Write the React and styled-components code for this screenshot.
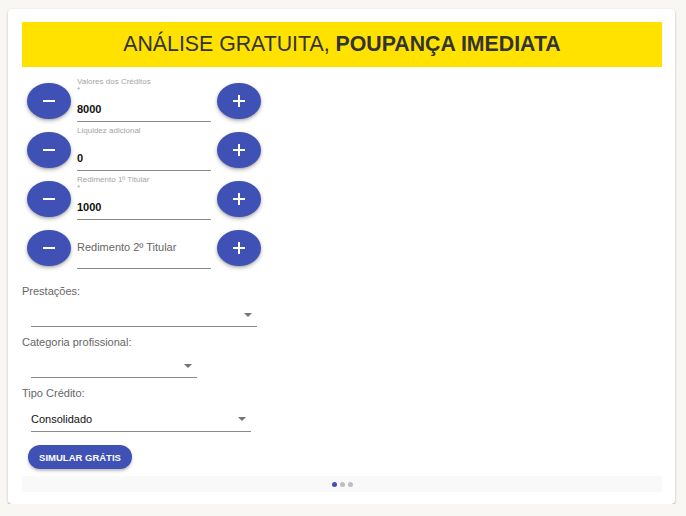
import React from "react";
import styled, { createGlobalStyle } from "styled-components";

const Global = createGlobalStyle`
  html, body { margin: 0; padding: 0; background: #f8f7f3; }
  body { padding: 9px 11px 0 8px; font-family: "Liberation Sans", Arial, sans-serif; }
  * { box-sizing: border-box; }
`;

const Card = styled.div`
  width: 667px;
  background: #fff;
  border-radius: 4px;
  box-shadow: 0 1px 3px rgba(0,0,0,0.2), 0 1px 1px rgba(0,0,0,0.14), 0 2px 1px -1px rgba(0,0,0,0.12);
  padding: 13px 13px 12px 14px;
`;

const Banner = styled.h1`
  margin: 0;
  height: 45px;
  background: #ffe200;
  display: flex;
  align-items: center;
  justify-content: center;
  font-size: 21.3px;
  font-weight: 400;
  color: #333;
  b { font-weight: 700; }
`;

const Steppers = styled.div`
  margin-top: 10px;
  padding-left: 5px;
  display: flex;
  flex-direction: column;
`;

const Row = styled.div`
  height: 49px;
  display: flex;
  align-items: flex-start;
`;

const Fab = styled.button`
  width: 44px;
  height: 36px;
  margin-top: 6px;
  border: none;
  border-radius: 50%;
  background: #3f51b5;
  box-shadow: 0 2px 4px rgba(0,0,0,0.25), 0 1px 2px rgba(0,0,0,0.15);
  display: flex;
  align-items: center;
  justify-content: center;
  padding: 0;
  svg { display: block; }
`;

const Field = styled.div`
  width: 134px;
  height: 45px;
  margin: 0 6px;
  border-bottom: 1px solid #8a8a8a;
  display: flex;
  flex-direction: column;
`;

const SmallLabel = styled.div`
  font-size: 8px;
  line-height: 10px;
  color: #a5a5a5;
  white-space: nowrap;
`;

const Star = styled.div`
  font-size: 8px;
  line-height: 6px;
  color: #a5a5a5;
`;

const Value = styled.div`
  margin-top: auto;
  padding-bottom: ${(p) => (p.$placeholder ? "13px" : "4px")};
  font-size: 11px;
  line-height: 16px;
  font-weight: ${(p) => (p.$placeholder ? 400 : 700)};
  color: ${(p) => (p.$placeholder ? "#666" : "#111")};
`;

const Group = styled.div`
  display: flex;
  flex-direction: column;
  align-items: flex-start;
  margin-top: ${(p) => p.$mt || 0}px;
`;

const GroupLabel = styled.div`
  font-size: 11px;
  line-height: 16px;
  color: #666;
`;

const Select = styled.div`
  position: relative;
  margin-left: 9px;
  width: ${(p) => p.$w}px;
  height: ${(p) => p.$h}px;
  border-bottom: 1px solid #8a8a8a;
  display: flex;
  align-items: flex-end;
  padding-bottom: 4px;
  font-size: 11px;
  line-height: 16px;
  color: #111;
`;

const Arrow = styled.span`
  position: absolute;
  right: 5px;
  bottom: ${(p) => p.$b}px;
  width: 0;
  height: 0;
  border-left: 4px solid transparent;
  border-right: 4px solid transparent;
  border-top: 4px solid #757575;
`;

const Submit = styled.button`
  margin: 13px 0 0 6px;
  height: 24px;
  width: 104px;
  border: none;
  border-radius: 12px;
  background: #3f51b5;
  color: #fff;
  font-family: "Liberation Sans", Arial, sans-serif;
  font-size: 9.5px;
  font-weight: 700;
  text-transform: uppercase;
  box-shadow: 0 2px 3px rgba(0,0,0,0.25);
  padding: 0;
`;

const Footer = styled.div`
  margin-top: 7px;
  height: 16px;
  background: #f9f9f9;
  display: flex;
  align-items: center;
  justify-content: center;
  gap: 3px;
`;

const Dot = styled.span`
  width: 5px;
  height: 5px;
  border-radius: 50%;
  background: ${(p) => (p.$active ? "#3f51b5" : "#bdbdbd")};
`;

const Minus = () => (
  <svg width="14" height="14" viewBox="0 0 14 14"><path d="M1 7h12" stroke="#fff" strokeWidth="2" /></svg>
);
const Plus = () => (
  <svg width="14" height="14" viewBox="0 0 14 14"><path d="M1 7h12M7 1v12" stroke="#fff" strokeWidth="2" /></svg>
);

const steppers = [
  { label: "Valores dos Créditos", req: true, value: "8000" },
  { label: "Liquidez adicional", req: false, value: "0" },
  { label: "Redimento 1º Titular", req: true, value: "1000" },
  { placeholder: "Redimento 2º Titular" },
];

export default function App() {
  return (
    <>
      <Global />
      <Card>
        <Banner>
          ANÁLISE GRATUITA,&nbsp;<b>POUPANÇA IMEDIATA</b>
        </Banner>
        <Steppers>
          {steppers.map((s, i) => (
            <Row key={i}>
              <Fab aria-label="diminuir"><Minus /></Fab>
              <Field>
                {s.label && <SmallLabel>{s.label}</SmallLabel>}
                {s.req && <Star>*</Star>}
                {s.placeholder ? (
                  <Value $placeholder>{s.placeholder}</Value>
                ) : (
                  <Value>{s.value}</Value>
                )}
              </Field>
              <Fab aria-label="aumentar"><Plus /></Fab>
            </Row>
          ))}
        </Steppers>
        <Group $mt={10}>
          <GroupLabel>Prestações:</GroupLabel>
          <Select $w={226} $h={28}><Arrow $b={9} /></Select>
        </Group>
        <Group $mt={7}>
          <GroupLabel>Categoria profissional:</GroupLabel>
          <Select $w={166} $h={28}><Arrow $b={9} /></Select>
        </Group>
        <Group $mt={7}>
          <GroupLabel>Tipo Crédito:</GroupLabel>
          <Select $w={220} $h={31}>Consolidado<Arrow $b={10} /></Select>
        </Group>
        <Submit>Simular grátis</Submit>
        <Footer>
          <Dot $active />
          <Dot />
          <Dot />
        </Footer>
      </Card>
    </>
  );
}
